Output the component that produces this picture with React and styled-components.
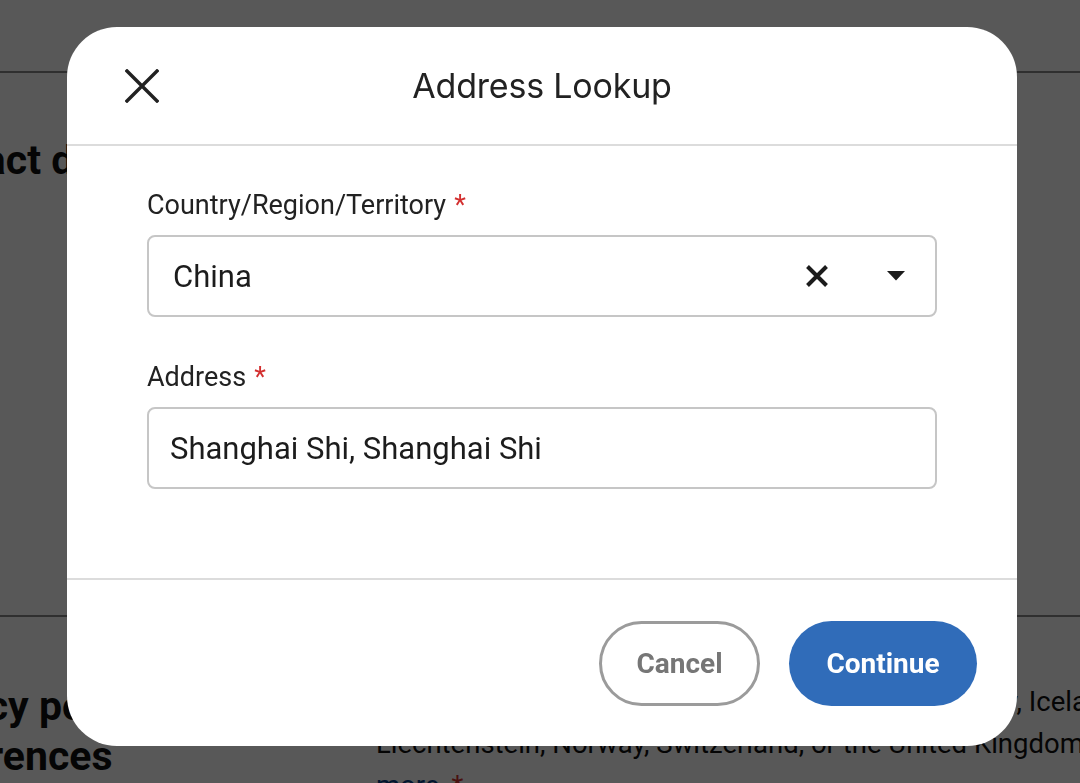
import React from "react";
import styled, { createGlobalStyle } from "styled-components";

const GlobalStyle = createGlobalStyle`
  html, body {
    margin: 0;
    padding: 0;
    background: #fff;
    overflow: hidden;
  }
  body {
    font-family: Roboto, "Liberation Sans", Arial, sans-serif;
    color: #1a1a1a;
  }
`;

// ---- page behind the dialog ----
const Page = styled.div`
  width: 1080px;
  height: 783px;
  overflow: hidden;
`;

const TopBar = styled.div`
  height: 71px;
  border-bottom: 2px solid #8a8a8a;
`;

const Section = styled.section`
  display: grid;
  grid-template-columns: ${(p) => p.$cols || "1fr"};
  padding: ${(p) => p.$pad || "0"};
  margin-left: ${(p) => p.$shift || 0}px;
  border-bottom: ${(p) => (p.$divider ? "2px solid #8a8a8a" : "none")};
  height: ${(p) => p.$height || "auto"};
  box-sizing: border-box;
`;

const Heading = styled.h2`
  margin: 0;
  font-size: 41px;
  line-height: 50px;
  font-weight: 700;
  color: #111;
  width: ${(p) => p.$width || "auto"};
`;

const Para = styled.div`
  font-size: 27.5px;
  line-height: 42px;
  color: #111;
  white-space: nowrap;
  a {
    color: #0a3f8a;
    text-decoration: none;
  }
`;

const Req = styled.span`
  color: #d32f2f;
  margin-left: ${(p) => p.$gap || 8}px;
`;

// ---- dialog ----
const Overlay = styled.div`
  position: fixed;
  inset: 0;
  background: rgba(0, 0, 0, 0.655);
  display: flex;
  justify-content: center;
  align-items: flex-start;
  padding: 27px 0 0 4px;
`;

const Modal = styled.div`
  width: 950px;
  height: 719px;
  background: #fff;
  border-radius: 50px;
  display: flex;
  flex-direction: column;
  overflow: hidden;
`;

const Header = styled.div`
  height: 117px;
  flex-shrink: 0;
  display: grid;
  grid-template-columns: 1fr auto 1fr;
  align-items: center;
  padding: 0 58px;
  border-bottom: 2px solid #dcdcdc;
`;

const IconButton = styled.button`
  border: 0;
  background: none;
  padding: 0;
  width: 34px;
  height: 34px;
  display: flex;
  align-items: center;
  justify-content: center;
  color: #222;
  cursor: pointer;
  justify-self: start;
`;

const Title = styled.h1`
  margin: 0;
  font-family: Inter, "Open Sans", sans-serif;
  font-weight: 400;
  font-size: 34px;
  letter-spacing: -0.2px;
  color: #222;
`;

const Body = styled.div`
  flex: 1;
  padding: 43px 80px 0;
  display: flex;
  flex-direction: column;
  gap: 44px;
`;

const Field = styled.div`
  display: flex;
  flex-direction: column;
  gap: 14px;
`;

const Label = styled.label`
  font-size: 27px;
  line-height: 32px;
  color: #222;
`;

const Box = styled.div`
  height: 82px;
  box-sizing: border-box;
  border: 2px solid #c6c6c6;
  border-radius: 8px;
  display: flex;
  align-items: center;
  padding: 0 30px 0 ${(p) => p.$padLeft || 24}px;
  font-size: 31px;
  color: #1c1c1c;
`;

const Value = styled.span`
  flex: 1;
`;

const Controls = styled.div`
  display: flex;
  align-items: center;
  gap: 58px;
  color: #1c1c1c;
`;

const Footer = styled.div`
  height: 166px;
  flex-shrink: 0;
  border-top: 2px solid #dcdcdc;
  display: flex;
  align-items: center;
  justify-content: flex-end;
  gap: 29px;
  padding: 0 40px;
`;

const Pill = styled.button`
  height: 85px;
  width: ${(p) => p.$w}px;
  border-radius: 999px;
  font-family: Roboto, sans-serif;
  font-weight: 700;
  font-size: 28px;
  box-sizing: border-box;
  cursor: pointer;
  border: ${(p) => (p.$primary ? "none" : "3px solid #9b9b9b")};
  background: ${(p) => (p.$primary ? "#306cb9" : "#fff")};
  color: ${(p) => (p.$primary ? "#fff" : "#767676")};
`;

const CloseIcon = ({ size = 34, stroke = 3.4 }) => (
  <svg width={size} height={size} viewBox="0 0 34 34" fill="none">
    <path
      d="M2 2 L32 32 M32 2 L2 32"
      stroke="currentColor"
      strokeWidth={stroke}
      strokeLinecap="square"
    />
  </svg>
);

const ClearIcon = () => (
  <svg width="24" height="24" viewBox="0 0 24 24" fill="none">
    <path d="M2.5 2.5 L21.5 21.5 M21.5 2.5 L2.5 21.5" stroke="currentColor" strokeWidth="4" />
  </svg>
);

const Caret = () => (
  <svg width="18" height="10" viewBox="0 0 18 10">
    <path d="M0 0 H18 L9 9.5 Z" fill="currentColor" />
  </svg>
);

export default function App() {
  return (
    <>
      <GlobalStyle />
      <Page>
        <TopBar />
        <Section $pad="62px 0 0" $height="544px" $shift={-103} $divider>
          <Heading>Contact details</Heading>
        </Section>
        <Section $cols="484px 1fr" $pad="64px 0 0" $shift={-108}>
          <Heading $width="400px">Privacy policy preferences</Heading>
          <Para>
            <div>Applies if you reside in the European Union, Germany, Iceland,</div>
            <div>Liechtenstein, Norway, Switzerland, or the United Kingdom. Learn</div>
            <div>
              <a href="#">more</a>
              <Req $gap={12}>*</Req>
            </div>
          </Para>
        </Section>
      </Page>

      <Overlay>
        <Modal role="dialog" aria-label="Address Lookup">
          <Header>
            <IconButton aria-label="Close">
              <CloseIcon />
            </IconButton>
            <Title>Address Lookup</Title>
            <span />
          </Header>

          <Body>
            <Field>
              <Label>
                Country/Region/Territory<Req>*</Req>
              </Label>
              <Box>
                <Value>China</Value>
                <Controls>
                  <ClearIcon />
                  <Caret />
                </Controls>
              </Box>
            </Field>
            <Field>
              <Label>
                Address<Req>*</Req>
              </Label>
              <Box $padLeft={21}>
                <Value>Shanghai Shi, Shanghai Shi</Value>
              </Box>
            </Field>
          </Body>

          <Footer>
            <Pill $w={161}>Cancel</Pill>
            <Pill $w={188} $primary>
              Continue
            </Pill>
          </Footer>
        </Modal>
      </Overlay>
    </>
  );
}
